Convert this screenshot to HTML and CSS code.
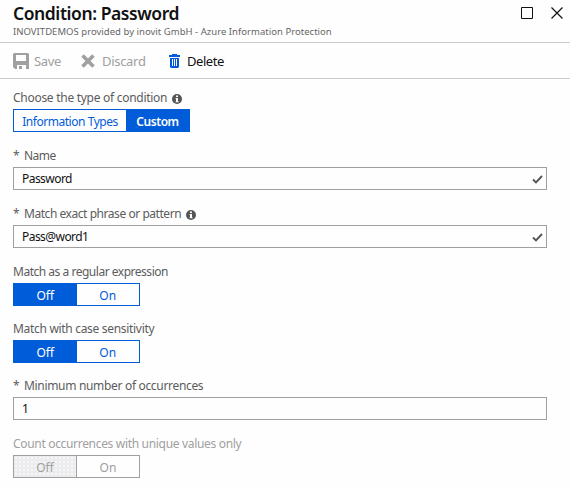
FILE: index.html
```html
<!DOCTYPE html>
<html lang="en">
<head>
<meta charset="utf-8">
<title>Condition: Password</title>
<link rel="stylesheet" href="styles.css">
</head>
<body>
<div class="blade">
  <header class="header">
    <div class="titles">
      <h1 class="title">Condition: Password</h1>
      <p class="subtitle">INOVITDEMOS provided by inovit GmbH - Azure Information Protection</p>
    </div>
    <div class="window-actions">
      <svg width="12" height="12" viewBox="0 0 12 12"><path d="M.5.5h11v11H.5z" fill="none" stroke="#111"/></svg>
      <svg width="12" height="12" viewBox="0 0 12 12"><path d="M.5.5l11 11M11.500.5l-11 11" fill="none" stroke="#111" stroke-width="1.200"/></svg>
    </div>
  </header>
  <nav class="toolbar">
    <span class="command save disabled"><svg width="16" height="16" viewBox="0 0 16 16"><path fill-rule="evenodd" d="M1 0h14l1 1v15h-3v-4H4v4H2l-2-2V1zM3 2v6h10V2zM6 13h3v3H6z" fill="#a0a0a0"/></svg><span>Save</span></span>
    <span class="command discard disabled"><svg width="14" height="14" viewBox="0 0 14 14"><path d="M1.500 1.500l11 11M12.500 1.500l-11 11" stroke="#a0a0a0" stroke-width="3.600"/></svg><span>Discard</span></span>
    <span class="command delete"><svg width="11" height="14" viewBox="0 0 11 14"><path fill-rule="evenodd" d="M3 0h5v1h3v2H0V1h3zM1 4h9v9l-1 1H2l-1-1zM3 5v7h1V5zM5 5v7h1V5zM7 5v7h1V5z" fill="#015cda"/></svg><span>Delete</span></span>
  </nav>
  <main class="form">
    <section class="field">
      <div class="label"><span class="t1">Choose the type of condition</span><svg class="info" width="10" height="10" viewBox="0 0 10 10"><circle cx="5" cy="5" r="5" fill="#555"/><path d="M4 1.500h2V3H4zM3.500 4H6v3.500h.7v.8H3.500v-.8H4V4.800h-.5z" fill="#fff"/></svg></div>
      <div class="switch types"><span class="option">Information Types</span><span class="option on">Custom</span></div>
    </section>
    <section class="field">
      <div class="label"><span class="star">*</span><span class="t2">Name</span></div>
      <div class="input"><span class="v1">Password</span><svg width="11" height="9" viewBox="0 0 11 9"><path d="M1 4.500l3 3L10 1" fill="none" stroke="#555" stroke-width="1.900"/></svg></div>
    </section>
    <section class="field">
      <div class="label"><span class="star">*</span><span class="t3">Match exact phrase or pattern</span><svg class="info" width="10" height="10" viewBox="0 0 10 10"><circle cx="5" cy="5" r="5" fill="#555"/><path d="M4 1.500h2V3H4zM3.500 4H6v3.500h.7v.8H3.500v-.8H4V4.800h-.5z" fill="#fff"/></svg></div>
      <div class="input"><span class="v2">Pass@word1</span><svg width="11" height="9" viewBox="0 0 11 9"><path d="M1 4.500l3 3L10 1" fill="none" stroke="#555" stroke-width="1.900"/></svg></div>
    </section>
    <section class="field short">
      <div class="label"><span class="t4">Match as a regular expression</span></div>
      <div class="switch"><span class="option on">Off</span><span class="option">On</span></div>
    </section>
    <section class="field short">
      <div class="label"><span class="t5">Match with case sensitivity</span></div>
      <div class="switch"><span class="option on">Off</span><span class="option">On</span></div>
    </section>
    <section class="field">
      <div class="label"><span class="star">*</span><span class="t6">Minimum number of occurrences</span></div>
      <div class="input"><span>1</span></div>
    </section>
    <section class="field inactive">
      <div class="label"><span class="t7">Count occurrences with unique values only</span></div>
      <div class="switch"><span class="option on">Off</span><span class="option">On</span></div>
    </section>
  </main>
</div>
</body>
</html>
```
FILE: styles.css
```css
* { box-sizing: border-box; }
body { margin: 0; background: #fefefe; font: 12px/16px "Noto Sans", "Open Sans", sans-serif; color: #111; white-space: nowrap; }
.blade { width: 570px; height: 490px; overflow: hidden; }
.header { display: flex; justify-content: space-between; height: 43px; padding: 2px 7px 0 13px; border-bottom: 1px solid #ccc; }
.title { margin: 0; font-size: 17.500px; line-height: 23px; font-weight: 600; letter-spacing: -.43px; }
.subtitle { margin: 0; padding-top: 1px; font-size: 9.500px; line-height: 12px; color: #666; letter-spacing: .03px; }
.window-actions { display: flex; gap: 18px; padding-top: 5px; }
.toolbar { display: flex; height: 36px; border-bottom: 1px solid #ccc; padding: 0 13px; align-items: center; }
.command { display: flex; align-items: center; font-size: 13px; letter-spacing: -.35px; }
.save { width: 68px; gap: 5px; }
.discard { width: 88px; gap: 7px; letter-spacing: -.3px; }
.delete { gap: 7px; letter-spacing: -.45px; }
.disabled { color: #a0a0a0; }
.form { padding: 10px 23px 0 13px; }
.field { height: 58px; }
.short { height: 57px; }
.label { display: flex; align-items: center; height: 20px; padding-bottom: 2px; color: #5c5c5c; }
.star { width: 11px; }
.info { margin: 2px 0 0 5px; }
.t1 { letter-spacing: -.28px; }
.t2 { letter-spacing: -.5px; }
.t3 { letter-spacing: -.45px; }
.t4 { letter-spacing: -.48px; }
.t5 { letter-spacing: -.31px; }
.t6 { letter-spacing: -.32px; }
.t7 { letter-spacing: -.32px; }
.v1 { letter-spacing: -.55px; }
.v2 { letter-spacing: -.55px; }
.switch { display: flex; width: 127px; height: 23px; border: 1px solid #015cda; color: #015cda; }
.option { flex: 1; display: flex; align-items: center; justify-content: center; padding-top: 2px; }
.on { background: #015cda; color: #fff; }
.types { width: 177px; }
.types .option { flex: none; width: 112px; letter-spacing: -.46px; }
.types .on { width: 63px; font-weight: 600; letter-spacing: -.45px; }
.input { display: flex; align-items: center; justify-content: space-between; height: 23px; border: 1px solid #a0a0a0; padding: 1px 3px 0 8px; }
.inactive .label, .inactive .switch { color: #a0a0a0; }
.inactive .switch { border-color: #a0a0a0; }
.inactive .on { color: #a0a0a0; background: #ececee radial-gradient(circle, #fafafa .6px, transparent 1px) 0 0 / 4px 4px; border-right: 1px solid #a0a0a0; }
```
